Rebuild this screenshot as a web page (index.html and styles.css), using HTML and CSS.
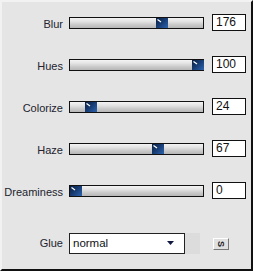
FILE: index.html
```html
<!DOCTYPE html>
<html>
<head>
<meta charset="utf-8">
<link rel="stylesheet" href="styles.css">
</head>
<body>
<div class="panel">
  <div class="row">
    <span class="label">Blur</span>
    <div class="track"><div class="thumb" style="left:86px"><svg width="12" height="10" viewBox="0 0 12 10"><path d="M1.5 1.5 L5 4" stroke="#fff" stroke-width="1.2"/></svg></div></div>
    <div class="num">176</div>
  </div>
  <div class="row">
    <span class="label">Hues</span>
    <div class="track"><div class="thumb" style="left:122px"><svg width="12" height="10" viewBox="0 0 12 10"><path d="M1.5 1.5 L5 4" stroke="#fff" stroke-width="1.2"/></svg></div></div>
    <div class="num">100</div>
  </div>
  <div class="row">
    <span class="label">Colorize</span>
    <div class="track"><div class="thumb" style="left:15px"><svg width="12" height="10" viewBox="0 0 12 10"><path d="M1.5 1.5 L5 4" stroke="#fff" stroke-width="1.2"/></svg></div></div>
    <div class="num">24</div>
  </div>
  <div class="row">
    <span class="label">Haze</span>
    <div class="track"><div class="thumb" style="left:82px"><svg width="12" height="10" viewBox="0 0 12 10"><path d="M1.5 1.5 L5 4" stroke="#fff" stroke-width="1.2"/></svg></div></div>
    <div class="num">67</div>
  </div>
  <div class="row">
    <span class="label">Dreaminess</span>
    <div class="track"><div class="thumb" style="left:0px"><svg width="12" height="10" viewBox="0 0 12 10"><path d="M1.5 1.5 L5 4" stroke="#fff" stroke-width="1.2"/></svg></div></div>
    <div class="num">0</div>
  </div>
  <div class="glue-row">
    <span class="label">Glue</span>
    <div class="select-wrap">
      <div class="select"><span>normal</span><svg class="arrow" width="8" height="5" viewBox="0 0 8 5"><path d="M0 0 H7 L3.5 4 Z" fill="#101840"/></svg></div>
    </div>
    <div class="sbtn"><span>S</span></div>
  </div>
</div>
</body>
</html>
```

FILE: styles.css
```css
html, body {
  margin: 0;
  padding: 0;
  background: #e4e4e4;
}
.panel {
  box-sizing: border-box;
  width: 253px;
  height: 271px;
  background: #e5e5e5;
  border-top: 2px solid #f2f2f2;
  border-left: 2px solid #f2f2f2;
  border-right: 2px solid #111;
  border-bottom: 2px solid #111;
  padding-top: 12px;
  font-family: "Liberation Sans", Arial, sans-serif;
  color: #22232e;
}
.row {
  display: flex;
  align-items: flex-start;
  height: 16px;
  margin-bottom: 26px;
}
.label {
  width: 61px;
  text-align: right;
  font-size: 11px;
  line-height: 16px;
  margin-top: 2px;
  flex: none;
}
.track {
  position: relative;
  box-sizing: border-box;
  width: 135px;
  height: 12px;
  margin-top: 3px;
  margin-left: 6px;
  border: 1px solid #111;
  background: linear-gradient(#f4f4f4 0%, #e2e2e2 35%, #c8c8c8 70%, #b6b6b6 100%);
  flex: none;
}
.thumb {
  position: absolute;
  top: 0;
  width: 12px;
  height: 10px;
  background: linear-gradient(135deg, #0a1e40 0%, #163a70 45%, #2d64b0 100%);
}
.thumb svg {
  display: block;
}
.num {
  box-sizing: border-box;
  width: 34px;
  height: 17px;
  margin-left: 8px;
  border: 1px solid #111;
  background: #fff;
  font-size: 12px;
  line-height: 15px;
  padding-left: 3px;
  color: #111;
  flex: none;
}
.glue-row {
  display: flex;
  align-items: center;
  margin-top: 34px;
  height: 22px;
}
.glue-row .label {
  margin-top: 0;
  line-height: 22px;
}
.select-wrap {
  margin-left: 6px;
  width: 131px;
  height: 21px;
  background: #dcdcdc;
  flex: none;
}
.select {
  box-sizing: border-box;
  width: 116px;
  height: 21px;
  border: 1px solid #222;
  background: #fff;
  display: flex;
  align-items: center;
  justify-content: space-between;
  padding: 0 9px 0 3px;
  font-size: 11.5px;
  color: #111;
}
.arrow {
  display: block;
}
.sbtn {
  box-sizing: border-box;
  width: 16px;
  height: 12px;
  margin-left: 13px;
  margin-top: 1px;
  background: #e0e0e0;
  border-top: 1px solid #fff;
  border-left: 1px solid #fff;
  border-right: 1px solid #777;
  border-bottom: 1px solid #777;
  display: flex;
  align-items: center;
  justify-content: center;
  font-family: "Liberation Sans", Arial, sans-serif;
  font-weight: bold;
  font-size: 9px;
  color: #222;
}
.sbtn span {
  display: block;
  transform: rotate(90deg);
}
```
